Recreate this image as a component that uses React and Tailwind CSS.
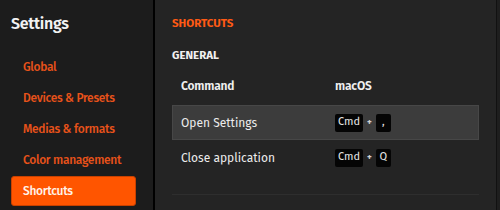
import React from "react";

const font = { fontFamily: '"Fira Sans", Lato, "Open Sans", sans-serif' };

function Key({ children, w }) {
  return (
    <span className={`inline-flex h-[18px] items-center justify-center rounded-[2px] bg-[#050505] text-[11px] text-[#e5e5e5] ${w}`}>
      {children}
    </span>
  );
}

function Shortcut({ k }) {
  return (
    <div className="flex items-center gap-[4px]">
      <Key w="w-[28px]">Cmd</Key>
      <span className="text-[9px] font-bold text-[#d0d0d0]">+</span>
      <Key w="w-[15px]">{k}</Key>
    </div>
  );
}

export default function App() {
  const items = ["Global", "Devices & Presets", "Medias & formats", "Color management"];
  return (
    <div className="flex h-[210px] w-[500px] overflow-hidden bg-[#1e1e1e]" style={font}>
      <aside className="w-[155px] shrink-0 border-r-2 border-black bg-[#1c1c1c]">
        <div className="pl-[11px] pt-[13px] text-[16px] font-semibold leading-[22px] tracking-[-0.3px] text-[#f2f2f2]">Settings</div>
        <nav className="mt-[17px] flex flex-col gap-px pl-[11px] pr-[17px]">
          {items.map((t) => (
            <div key={t} className="flex h-[30px] items-center pl-[12px] text-[12px] font-medium tracking-[-0.3px] text-[#e8521a]">
              {t}
            </div>
          ))}
          <div className="flex h-[30px] items-center rounded-[3px] border border-[#c84100] bg-[#ff5500] pl-[11px] text-[12px] font-medium tracking-[-0.3px] text-[#fff3ea]">
            Shortcuts
          </div>
        </nav>
      </aside>
      <main className="w-[342px] shrink-0 border-r border-[#111] bg-[#242424] px-[17px]">
        <div className="pt-[16px] text-[11.5px] font-bold leading-[14px] text-[#ff5a14]">SHORTCUTS</div>
        <div className="mt-[18px] text-[11.5px] font-bold leading-[14px] text-[#f0f0f0]">GENERAL</div>
        <div className="mt-[5px] flex h-[38px] items-center pl-[9px] text-[12px] font-semibold tracking-[-0.2px] text-[#f0f0f0]">
          <div className="w-[154px]">Command</div>
          <div>macOS</div>
        </div>
        <div className="flex h-[35px] items-center border border-[#474747] bg-[#3c3c3c] pl-[8px] text-[12px] text-[#ececec]">
          <div className="w-[154px]">Open Settings</div>
          <Shortcut k="," />
        </div>
        <div className="flex h-[35px] items-center pl-[9px] text-[12px] text-[#ececec]">
          <div className="w-[154px]">Close application</div>
          <Shortcut k="Q" />
        </div>
        <div className="mt-[19px] border-t border-[#2e2e2e]" />
      </main>
    </div>
  );
}
